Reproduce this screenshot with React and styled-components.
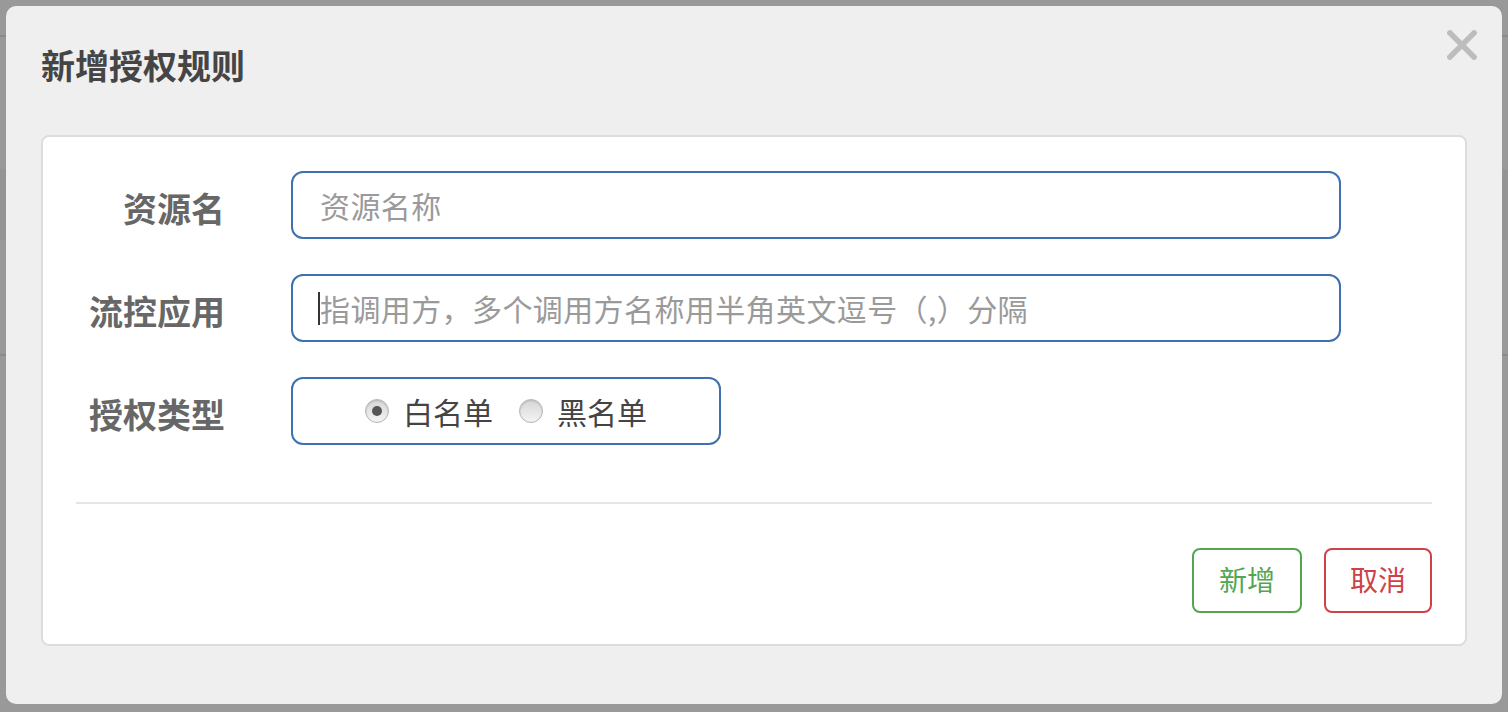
import styled, { createGlobalStyle } from "styled-components";

const GlobalStyle = createGlobalStyle`
  html, body {
    margin: 0;
    padding: 0;
  }
  body {
    background: #999;
    font-family: "Noto Sans CJK SC", "Noto Sans", sans-serif;
  }
  * {
    box-sizing: border-box;
  }
`;

const Overlay = styled.div`
  min-height: 712px;
  padding: 6px 6px 8px 6px;
  background-color: #999;
  background-image: linear-gradient(
    to bottom,
    transparent 35px,
    #8a8a8a 35px,
    #8a8a8a 37px,
    transparent 37px,
    transparent 169px,
    #949494 169px,
    #949494 240px,
    transparent 240px,
    transparent 354px,
    #8a8a8a 354px,
    #8a8a8a 356px,
    transparent 356px
  );
`;

const Modal = styled.div`
  background: #efefef;
  border-radius: 10px;
  padding-bottom: 58px;
`;

const Header = styled.div`
  display: flex;
  justify-content: space-between;
  align-items: flex-start;
  padding: 34px 24px 0 35px;
  margin-bottom: 45px;
`;

const Title = styled.h4`
  margin: 0;
  font-size: 34px;
  line-height: 50px;
  font-weight: bold;
  color: #454545;
`;

const Close = styled.button`
  margin-top: -11px;
  width: 32px;
  height: 32px;
  padding: 0;
  border: none;
  background: none;
  cursor: pointer;
  display: flex;
  align-items: center;
  justify-content: center;
`;

const Card = styled.div`
  margin: 0 35px;
  background: #fff;
  border: 2px solid #dddddd;
  border-radius: 8px;
  padding: 34px 33px 31px;
`;

const Form = styled.div`
  display: grid;
  grid-template-columns: 149px 1050px;
  grid-auto-rows: 68px;
  column-gap: 66px;
  row-gap: 35px;
`;

const Label = styled.label`
  height: 68px;
  padding-top: 6px;
  font-size: 34px;
  font-weight: bold;
  color: #676767;
  text-align: right;
  line-height: 62px;
  white-space: nowrap;
`;

const Field = styled.div`
  position: relative;
`;

const Input = styled.input`
  display: block;
  width: 100%;
  height: 68px;
  border: 2px solid #3f70b0;
  border-radius: 12px;
  padding: 0 27px;
  font-family: inherit;
  font-size: 30px;
  letter-spacing: 0.4px;
  color: #333;
  background: #fff;
  outline: none;

  &::placeholder {
    color: #9a9a9a;
  }
`;

const Caret = styled.span`
  position: absolute;
  left: 27px;
  top: 18px;
  width: 2px;
  height: 33px;
  background: #333;
`;

const RadioGroup = styled.div`
  width: 430px;
  height: 68px;
  border: 2px solid #3f70b0;
  border-radius: 12px;
  display: flex;
  align-items: center;
  justify-content: center;
  gap: 26px;
`;

const RadioLabel = styled.label`
  display: flex;
  align-items: center;
  gap: 14px;
  font-size: 30px;
  color: #444;
  cursor: pointer;
`;

const RadioDot = styled.span`
  width: 24px;
  height: 24px;
  border-radius: 50%;
  border: 1px solid #b5b5b5;
  background: linear-gradient(to bottom, #d6d6d6, #f4f4f4);
  box-shadow: inset 0 1px 2px rgba(0, 0, 0, 0.15);
  display: flex;
  align-items: center;
  justify-content: center;

  &::after {
    content: "";
    width: 10px;
    height: 10px;
    border-radius: 50%;
    background: #555;
    display: ${(p) => (p.checked ? "block" : "none")};
  }
`;

const Divider = styled.hr`
  margin: 57px 0 0;
  border: none;
  height: 2px;
  background: #e5e5e5;
`;

const Footer = styled.div`
  display: flex;
  justify-content: flex-end;
  gap: 22px;
  margin-top: 44px;
`;

const Button = styled.button`
  height: 65px;
  padding: 0 ${(p) => p.pad}px;
  padding-bottom: 3px;
  background: #fff;
  border: 2px solid ${(p) => p.color};
  color: ${(p) => p.color};
  border-radius: 8px;
  font-family: inherit;
  font-size: 28px;
  cursor: pointer;
`;

const Radio = ({ checked, children }) => (
  <RadioLabel>
    <RadioDot checked={checked} />
    {children}
  </RadioLabel>
);

const App = () => (
  <>
    <GlobalStyle />
    <Overlay>
      <Modal>
        <Header>
          <Title>新增授权规则</Title>
          <Close aria-label="close">
            <svg width="30" height="30" viewBox="0 0 30 30">
              <path
                d="M3 3 L27 27 M27 3 L3 27"
                stroke="#bdbdbd"
                strokeWidth="5.5"
                strokeLinecap="square"
              />
            </svg>
          </Close>
        </Header>
        <Card>
          <Form>
            <Label>资源名</Label>
            <Field>
              <Input placeholder="资源名称" />
            </Field>
            <Label>流控应用</Label>
            <Field>
              <Input placeholder="指调用方，多个调用方名称用半角英文逗号（,）分隔" />
              <Caret />
            </Field>
            <Label>授权类型</Label>
            <RadioGroup>
              <Radio checked>白名单</Radio>
              <Radio>黑名单</Radio>
            </RadioGroup>
          </Form>
          <Divider />
          <Footer>
            <Button color="#52a652" pad={25}>新增</Button>
            <Button color="#cf4148" pad={24}>取消</Button>
          </Footer>
        </Card>
      </Modal>
    </Overlay>
  </>
);

export default App;
